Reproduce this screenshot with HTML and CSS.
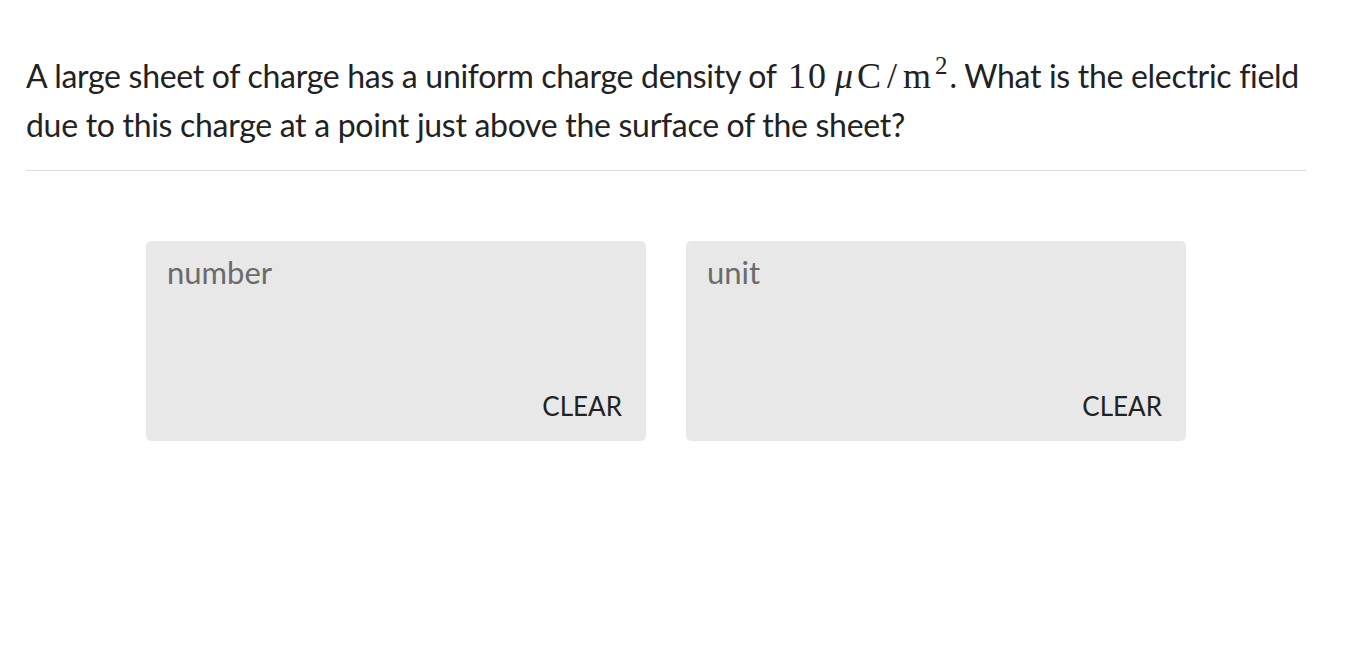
FILE: index.html
```html
<!DOCTYPE html>
<html>
<head>
    <meta http-equiv="Content-Type" content="text/html; charset=utf-8" />
    <title>Question</title>
    <link rel="stylesheet" href="styles.css">
</head>
<body>

<div class="question">
    <p class="prompt">A large sheet of charge has a uniform charge density of <span class="math">10<span class="thin"></span><i>μ</i>C<span class="slash">/</span>m<sup>2</sup></span>. What is the electric field due to this charge at a point just above the surface of the sheet?</p>
    <hr class="rule" />
    <div class="answers">
        <!--number-->
        <div class="field">
            <div class="placeholder">number</div>
            <div class="clear">CLEAR</div>
        </div>
        <!--unit-->
        <div class="field">
            <div class="placeholder">unit</div>
            <div class="clear">CLEAR</div>
        </div>
    </div>
</div>
</body>
</html>
```

FILE: styles.css
```css
body {
    margin:0;
    background-color:#fff;
    font-family:Lato, "Open Sans", sans-serif;
    color:#222;
}
.question {
    width:1280px;
    padding:0 0 0 26px;
}
.prompt {
    margin:0;
    padding-top:51px;
    font-size:32px;
    line-height:49px;
    letter-spacing:-0.3px;
}
.math {
    font-family:"Liberation Serif", serif;
    font-size:36px;
    line-height:1;
    letter-spacing:2px;
    margin-left:4px;
}
.math .thin {
    display:inline-block;
    width:7px;
}
.math i {
    font-style:italic;
    margin-right:2px;
}
.math .slash {
    margin:0 4px;
}
.math sup {
    font-size:25px;
    line-height:0;
    margin-left:2px;
    vertical-align:14px;
}
.rule {
    margin:21px 0 0 0;
    border:0;
    border-top:1px solid #ddd;
}
.answers {
    display:flex;
    justify-content:center;
    gap:40px;
    padding-top:70px;
}
.field {
    display:flex;
    flex-direction:column;
    justify-content:space-between;
    box-sizing:border-box;
    width:500px;
    height:200px;
    padding:12px 24px 19px 21px;
    background:#e8e8e8;
    border-radius:5px;
}
.placeholder {
    font-size:31px;
    color:#6b6b6b;
}
.clear {
    align-self:flex-end;
    font-size:26px;
    color:#222;
}
```
